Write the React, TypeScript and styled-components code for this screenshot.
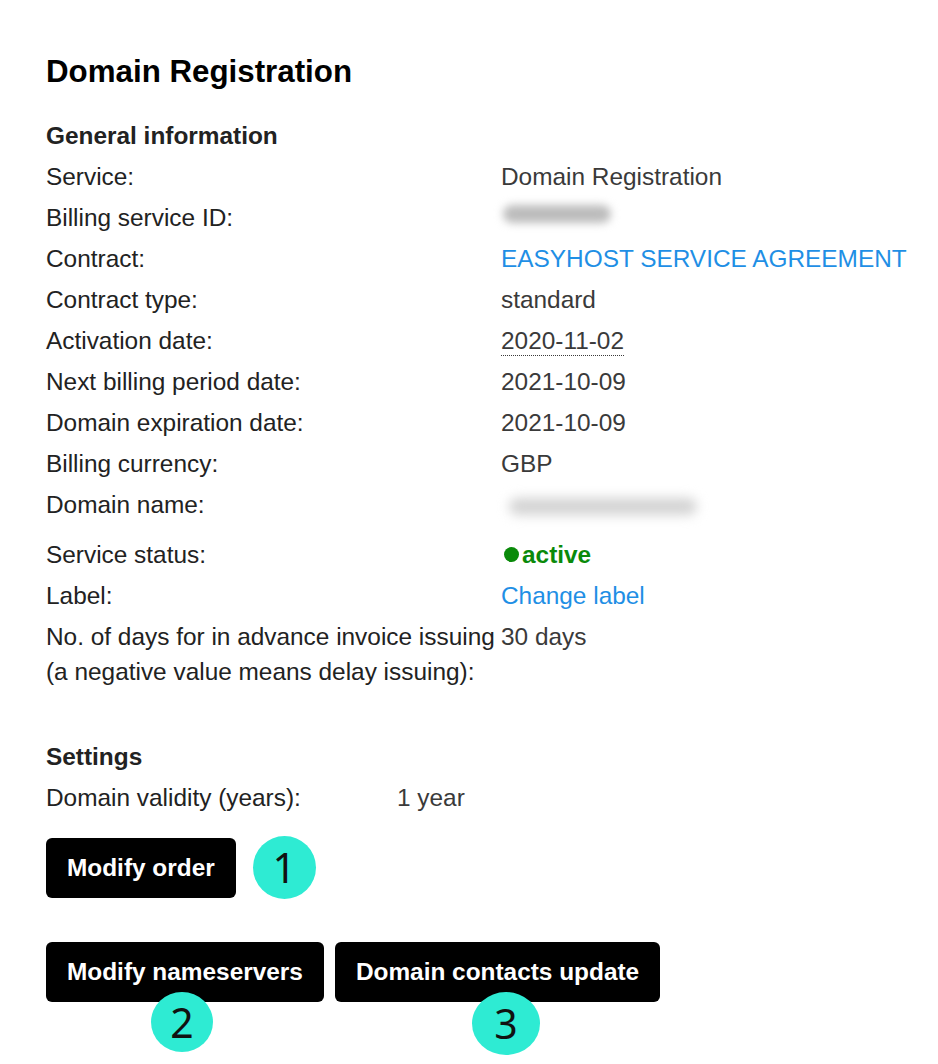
import React from "react";
import styled, { createGlobalStyle } from "styled-components";

const GlobalStyle = createGlobalStyle`
  html, body {
    margin: 0;
    padding: 0;
    background: #ffffff;
  }
  body {
    font-family: "Liberation Sans", Arial, sans-serif;
    color: #222222;
  }
`;

const Page = styled.div`
  padding: 54px 0 0 46px;
  width: 892px;
  box-sizing: border-box;
`;

const Title = styled.h1`
  margin: 0 0 25px 0;
  font-size: 31.3px;
  line-height: 36px;
  font-weight: 700;
  color: #000000;
`;

const Section = styled.section<{ $gap?: number }>`
  display: flex;
  flex-direction: column;
  margin-top: ${(p) => p.$gap ?? 0}px;
`;

const SectionTitle = styled.h2`
  margin: 0;
  padding: 3px 0;
  font-size: 24.4px;
  line-height: 35px;
  font-weight: 700;
  color: #222222;
`;

const Row = styled.div`
  display: flex;
  align-items: flex-start;
  padding: 3px 0;
  font-size: 24.4px;
  line-height: 35px;
`;

const Label = styled.div<{ $w: number }>`
  flex: 0 0 ${(p) => p.$w}px;
  width: ${(p) => p.$w}px;
  color: #222222;
`;

const Value = styled.div`
  color: #3a3a3a;
  white-space: nowrap;
`;

const Link = styled.a`
  color: #1f8fe5;
  text-decoration: none;
  cursor: pointer;
`;

const DottedDate = styled.span`
  border-bottom: 1px dotted #3a3a3a;
  padding-bottom: 1px;
`;

const Status = styled.span`
  color: #0a8a0a;
  font-weight: 700;
`;

const Dot = styled.span`
  display: inline-block;
  width: 15px;
  height: 15px;
  border-radius: 50%;
  background: #0a8a0a;
  margin: 0 3px 0 3px;
  vertical-align: 1px;
`;

const BlurBox = styled.div<{ $h: number; $top: number; $left: number }>`
  box-sizing: border-box;
  height: ${(p) => p.$h}px;
  width: 220px;
  padding: ${(p) => p.$top}px 0 0 ${(p) => p.$left}px;
`;

const Blob = styled.div<{ $w: number; $bh: number; $c: string; $b: number }>`
  width: ${(p) => p.$w}px;
  height: ${(p) => p.$bh}px;
  background: ${(p) => p.$c};
  border-radius: ${(p) => p.$bh / 2}px;
  filter: blur(${(p) => p.$b}px);
`;

const ButtonRow = styled.div<{ $gap: number; $top: number; $align: string }>`
  display: flex;
  align-items: ${(p) => p.$align};
  gap: ${(p) => p.$gap}px;
  margin-top: ${(p) => p.$top}px;
`;

const ButtonStack = styled.div`
  display: flex;
  flex-direction: column;
  align-items: flex-start;
`;

const Button = styled.button`
  height: 60px;
  padding: 0 21px;
  border: none;
  border-radius: 6px;
  background: #000000;
  color: #ffffff;
  font-family: "Liberation Sans", Arial, sans-serif;
  font-size: 24.4px;
  font-weight: 700;
  cursor: pointer;
  white-space: nowrap;
`;

const Badge = styled.div<{ $w: number; $h: number }>`
  width: ${(p) => p.$w}px;
  height: ${(p) => p.$h}px;
  border-radius: 50%;
  background: #2eebd3;
  color: #111111;
  display: flex;
  align-items: center;
  justify-content: center;
  font-family: "Noto Sans", "Open Sans", sans-serif;
  font-size: 41px;
  font-weight: 400;
  line-height: 1;
  flex: 0 0 auto;
`;

const OverlapBadge = styled(Badge)<{ $left: number }>`
  position: relative;
  z-index: 1;
  margin-top: -10px;
  margin-left: ${(p) => p.$left}px;
`;

type Info = { label: string; value: React.ReactNode };

const info: Info[] = [
  { label: "Service:", value: "Domain Registration" },
  {
    label: "Billing service ID:",
    value: (
      <BlurBox $h={35} $top={5} $left={2}>
        <Blob $w={108} $bh={18} $c="#bcbcbc" $b={4} />
      </BlurBox>
    ),
  },
  { label: "Contract:", value: <Link>EASYHOST SERVICE AGREEMENT</Link> },
  { label: "Contract type:", value: "standard" },
  { label: "Activation date:", value: <DottedDate>2020-11-02</DottedDate> },
  { label: "Next billing period date:", value: "2021-10-09" },
  { label: "Domain expiration date:", value: "2021-10-09" },
  { label: "Billing currency:", value: "GBP" },
  {
    label: "Domain name:",
    value: (
      <BlurBox $h={44} $top={11} $left={8}>
        <Blob $w={188} $bh={17} $c="#d3d3d3" $b={6} />
      </BlurBox>
    ),
  },
  {
    label: "Service status:",
    value: (
      <Status>
        <Dot />
        active
      </Status>
    ),
  },
  { label: "Label:", value: <Link>Change label</Link> },
  {
    label: "No. of days for in advance invoice issuing (a negative value means delay issuing):",
    value: "30 days",
  },
];

export default function App() {
  return (
    <>
      <GlobalStyle />
      <Page>
        <Title>Domain Registration</Title>
        <Section>
          <SectionTitle>General information</SectionTitle>
          {info.map((r) => (
            <Row key={r.label}>
              <Label $w={455}>{r.label}</Label>
              <Value>{r.value}</Value>
            </Row>
          ))}
        </Section>
        <Section $gap={44}>
          <SectionTitle>Settings</SectionTitle>
          <Row>
            <Label $w={351}>Domain validity (years):</Label>
            <Value>1 year</Value>
          </Row>
        </Section>
        <ButtonRow $gap={17} $top={18} $align="center">
          <Button>Modify order</Button>
          <Badge $w={63} $h={63}>1</Badge>
        </ButtonRow>
        <ButtonRow $gap={11} $top={43} $align="flex-start">
          <ButtonStack>
            <Button>Modify nameservers</Button>
            <OverlapBadge $w={62} $h={60} $left={105}>2</OverlapBadge>
          </ButtonStack>
          <ButtonStack>
            <Button>Domain contacts update</Button>
            <OverlapBadge $w={68} $h={63} $left={137}>3</OverlapBadge>
          </ButtonStack>
        </ButtonRow>
      </Page>
    </>
  );
}
